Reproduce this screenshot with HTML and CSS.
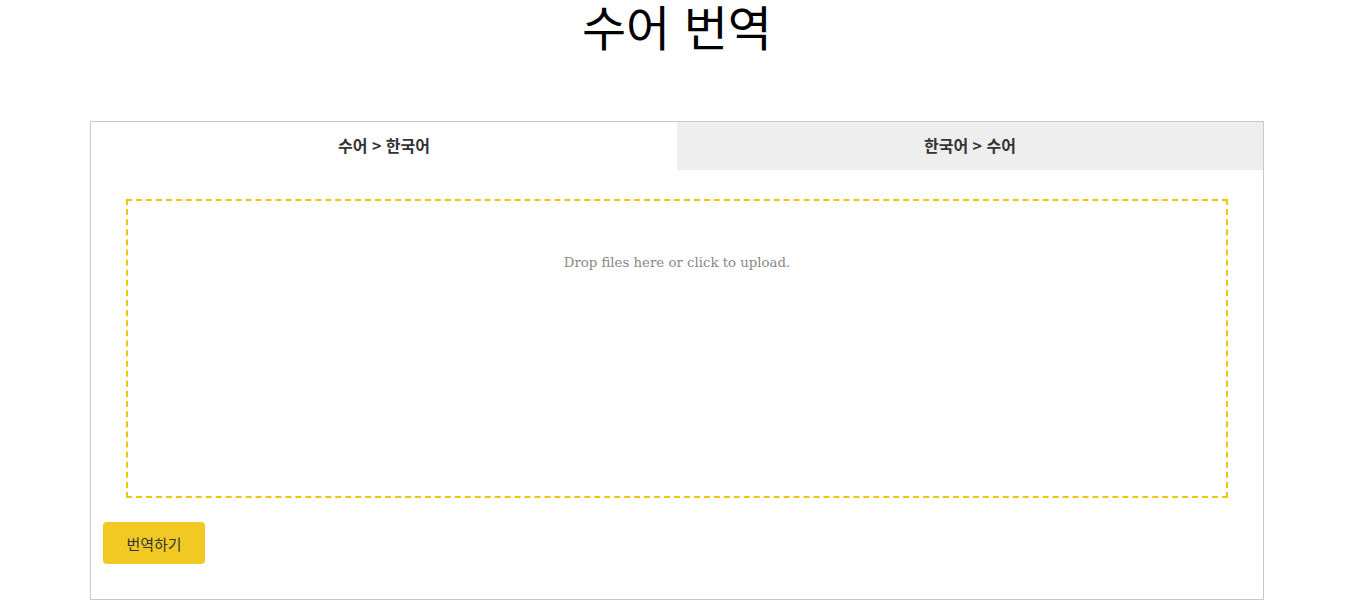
FILE: index.html
```html
<!DOCTYPE html>
<html lang="ko">
<head>
<meta charset="utf-8">
<link rel="stylesheet" href="styles.css">
</head>
<body>
<h1 class="title">수어 번역</h1>
<div class="panel">
  <div class="tabs">
    <div class="tab tab-active">수어 &gt; 한국어</div>
    <div class="tab">한국어 &gt; 수어</div>
  </div>
  <div class="content">
    <div class="dropzone">
      <p class="drop-msg">Drop files here or click to upload.</p>
    </div>
    <button class="btn">번역하기</button>
  </div>
</div>
</body>
</html>
```
FILE: styles.css
```css
html, body { margin: 0; padding: 0; background: #fff; }
body {
  padding: 0 9px 0 8px;
  font-family: "Noto Sans CJK KR", "Noto Sans", sans-serif;
}
.title {
  margin: 0;
  height: 121px;
  text-align: center;
  font-family: "Noto Sans CJK KR", serif;
  font-weight: 400;
  font-size: 48px;
  line-height: 50px;
  color: #000;
}
.panel {
  width: 1172px;
  margin: 0 auto;
  border: 1px solid #c8c8c8;
}
.tabs { display: flex; }
.tab {
  flex: 1;
  height: 48px;
  padding-bottom: 2px;
  box-sizing: border-box;
  display: flex;
  align-items: center;
  justify-content: center;
  font-size: 16px;
  font-weight: 700;
  color: #333;
  background: #eee;
}
.tab-active { background: #fff; }
.content { padding: 29px 12px 35px; }
.dropzone {
  margin: 0 23px;
  height: 295px;
  border: 2px dashed #f1c40f;
}
.drop-msg {
  margin: 54px 0 0;
  text-align: center;
  font-family: "DejaVu Serif", serif;
  font-size: 13.3px;
  color: #888;
}
.btn {
  margin-top: 24px;
  width: 102px;
  height: 42px;
  border: none;
  border-radius: 4px;
  background: #f1c922;
  color: #333;
  font-family: "Noto Sans CJK KR", sans-serif;
  font-size: 15px;
  padding: 0;
  display: block;
}
```
